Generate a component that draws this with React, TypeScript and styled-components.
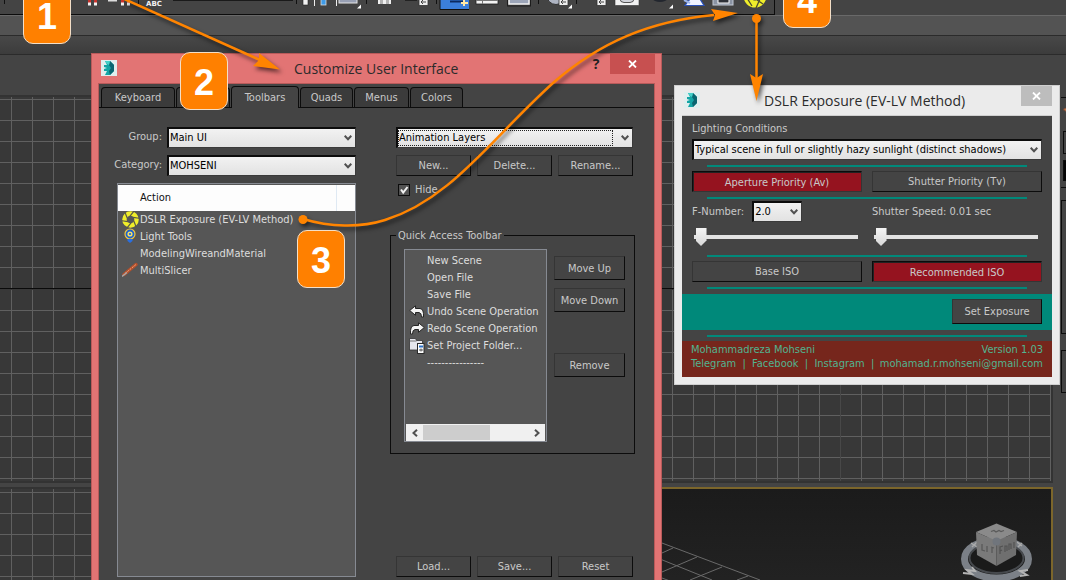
import React from "react";
import styled, { createGlobalStyle, css } from "styled-components";

const ink = "#c9c9c9";
const panel = "#444444";

const GlobalStyle = createGlobalStyle`
  *, *::before, *::after { box-sizing: border-box; }
  body {
    margin: 0;
    background: ${panel};
    color: ${ink};
    font: 11px/17px "DejaVu Sans Condensed", "Noto Sans", sans-serif;
  }
  button, select, input { font: inherit; color: inherit; margin: 0; }
  svg { display: block; }
`;

/* ---------- workspace ---------- */

const Desktop = styled.main`
  position: relative;
  display: flex;
  flex-direction: column;
  height: 100vh;
  min-height: 560px;
  overflow: hidden;
`;
const ToolbarRow = styled.header`
  height: 16px;
  flex: none;
  border-bottom: 1px solid #696969;
`;
const Tools = styled.div`
  display: flex;
  width: max-content;
  height: 15px;
  border: solid #0c0c0c;
  border-width: 0 1px 1px 0;
`;
const Tool = styled.button`
  flex: none;
  padding: 0;
  border: 0;
  background: none;
`;
const Band = styled.div`
  flex: none;
  height: 20px;
  background: #535353;
  border-bottom: 1px solid #2b2b2b;
`;
const LowerBand = styled(Band)`
  height: 19px;
  background: linear-gradient(#484848, #3c3c3c);
`;
const Workspace = styled.div`
  flex: 1;
  min-height: 0;
  display: grid;
  grid-template-columns: 380px 1fr 13px;
`;
const PaneColumn = styled.div`
  display: flex;
  flex-direction: column;
  gap: 4px;
  padding-top: 40px;
  min-width: 0;
`;
const Pane = styled.div<{ $grow?: boolean }>`
  ${(p) => (p.$grow ? "flex: 1; min-height: 0;" : "flex: none; height: 388px;")}
  border: 2px solid #333333;
  border-left: 0;
  background: #383838;
  overflow: hidden;
`;
const Perspective = styled(Pane)`
  border-color: #7c662b;
  border-bottom: 0;
  background: linear-gradient(#1b1b1b, #272727);
  display: flex;
  justify-content: space-between;
`;
const SidePanel = styled.aside`
  display: flex;
  flex-direction: column;
  gap: 16px;
  padding: 42px 0 0 8px;
`;
const SideBox = styled.div<{ $h: number; $fill?: boolean }>`
  height: ${(p) => p.$h}px;
  border: 1px solid #0c0c0c;
  border-right: 0;
  background: ${(p) => (p.$fill ? "#050505" : "none")};
`;
const SideTop = styled.div`
  display: flex;
  flex-direction: column;
  gap: 6px;
  height: 91px;
  margin-bottom: -4px;
  padding-left: 2px;
  border: solid #0c0c0c;
  border-width: 1px 0;
  overflow: hidden;
`;

/* ---------- windows ---------- */

const CustomizeWindow = styled.section`
  position: absolute;
  left: 91px;
  top: 53px;
  bottom: 0;
  width: 571px;
  display: flex;
  flex-direction: column;
  background: #e27474;
  border: 1px solid #b85a5a;
  border-bottom: 0;
  padding: 0 6px;
`;
const ExposureWindow = styled.section`
  position: absolute;
  left: 674px;
  top: 85px;
  width: 386px;
  background: #ebebeb;
  border: 1px solid #cfcfcf;
  padding: 0 7px 7px;
`;
const TitleBar = styled.header<{ $h: number; $pad: number }>`
  display: flex;
  justify-content: space-between;
  height: ${(p) => p.$h}px;
  padding-left: ${(p) => p.$pad}px;
  position: relative;
`;
const Logo = styled.svg`
  margin-top: 6px;
`;
const Title = styled.h1<{ $x: number; $size: number }>`
  position: absolute;
  left: ${(p) => p.$x}px;
  top: 4px;
  margin: 0;
  font: 400 ${(p) => p.$size}px/22px "Open Sans", "Noto Sans", sans-serif;
  color: #2b2b2b;
  white-space: nowrap;
`;
const WindowButtons = styled.div`
  display: flex;
  align-items: flex-start;
`;
const HelpButton = styled.button`
  width: 28px;
  height: 20px;
  padding: 0;
  border: 0;
  background: none;
  color: #222222;
  font: 700 14px/20px "Open Sans", sans-serif;
`;
const CloseButton = styled.button<{ $w: number; $bg: string }>`
  display: grid;
  place-items: center;
  width: ${(p) => p.$w}px;
  height: 20px;
  padding: 0;
  border: 0;
  background: ${(p) => p.$bg};
`;
const Client = styled.div`
  flex: 1;
  display: flex;
  flex-direction: column;
  min-height: 0;
  background: ${panel};
  border: solid #b85a5a;
  border-width: 1px 1px 0;
`;

const Tabs = styled.div`
  display: flex;
  align-items: flex-end;
  gap: 1px;
  height: 24px;
  padding-left: 2px;
  border-bottom: 1px solid #0c0c0c;
`;
const Tab = styled.button<{ $w: number; $on?: boolean }>`
  width: ${(p) => p.$w}px;
  height: ${(p) => (p.$on ? 22 : 20)}px;
  margin-bottom: ${(p) => (p.$on ? -1 : 0)}px;
  padding: 0;
  border: 1px solid #0c0c0c;
  border-bottom: 0;
  border-radius: 4px 4px 0 0;
  background: ${(p) => (p.$on ? panel : "#3b3b3b")};
`;

const raised = css`
  border: 1px solid;
  border-color: #353535 #0c0c0c #0c0c0c #353535;
  background: ${panel};
`;
const PushButton = styled.button<{ $w?: number; $h?: number }>`
  ${raised}
  ${(p) => (p.$w ? `width: ${p.$w}px;` : "flex: 1; min-width: 0;")}
  height: ${(p) => p.$h ?? 21}px;
  padding: 0;
  line-height: 17px;
`;
const ToggleButton = styled(PushButton)<{ $on?: boolean }>`
  ${(p) =>
    p.$on &&
    css`
      background: #95131f;
      border-color: #0c0c0c #353535 #353535 #0c0c0c;
      box-shadow: inset 1px 1px 0 #222222;
      padding-top: 2px;
    `}
`;

const SelectBox = styled.span`
  display: grid;
  align-items: center;
  border: 1px solid #3a3a3a;
  border-top: 2px solid #0c0c0c;
  border-left: 2px solid #0c0c0c;
  height: 21px;
  background: linear-gradient(#f2f2f2, #e2e2e2);
  color: #000000;
  & > * { grid-area: 1 / 1; }
  & > svg { justify-self: end; margin-right: 3px; pointer-events: none; }
`;
const NativeSelect = styled.select<{ $focus?: boolean }>`
  appearance: none;
  width: 100%;
  height: 18px;
  padding: 0 18px 0 1px;
  border: 0;
  background: none;
  line-height: 18px;
  ${(p) =>
    p.$focus &&
    css`
      width: calc(100% - 19px);
      height: 16px;
      padding: 0;
      line-height: 14px;
      border: 1px dotted #222222;
    `}
`;

const Body = styled.div`
  flex: 1;
  min-height: 0;
  display: grid;
  grid-template-columns: 239px 245px;
  column-gap: 34px;
  padding: 19px 0 3px 18px;
`;
const Column = styled.div`
  display: flex;
  flex-direction: column;
  min-height: 0;
`;
const Field = styled.label`
  display: grid;
  grid-template-columns: 45px 1fr;
  column-gap: 5px;
  height: 28px;
  align-items: start;
  & > b { font-weight: 400; text-align: right; white-space: nowrap; direction: rtl; line-height: 20px; }
  & > b > bdi { direction: ltr; }
`;
const List = styled.div<{ $h?: number; $w?: number }>`
  display: flex;
  flex-direction: column;
  ${(p) => (p.$h ? `height: ${p.$h}px; width: ${p.$w}px;` : "flex: 1; min-height: 0;")}
  background: #565656;
  border: 1px solid #868a92;
`;
const ActionTable = styled.table`
  width: 100%;
  border-collapse: collapse;
  th {
    height: 26px;
    padding: 0 0 0 22px;
    background: #fdfdfd;
    color: #111111;
    font-weight: 400;
    text-align: left;
    border-top: 1px solid #565656;
  }
  th + th { width: 19px; padding: 0; border-left: 1px solid #dfe9f3; }
  td { padding: 0 0 0 4px; height: 17px; color: #dddddd; }
`;
const Entry = styled.span`
  display: grid;
  grid-template-columns: 16px 1fr;
  column-gap: 2px;
  height: 17px;
  align-items: center;
  white-space: nowrap;
`;
const QuickList = styled.ul`
  flex: 1;
  list-style: none;
  margin: 0;
  padding: 2px 0 0 4px;
  color: #dddddd;
`;
const ScrollRow = styled.div`
  display: grid;
  grid-template-columns: 17px 67px 1fr 17px;
  height: 17px;
  margin: 0 1px;
  background: #f0f0f0;
`;
const ScrollArrow = styled.button`
  display: grid;
  place-items: center;
  padding: 0;
  border: 0;
  background: none;
`;
const ScrollThumb = styled.div`
  background: #cdcdcd;
  margin: 1px 0;
`;
const Spaced = styled.div<{ $top?: string }>`
  display: flex;
  gap: 6px;
  margin: ${(p) => p.$top ?? "7px"} 2px 0 6px;
`;
const ToolbarSelect = styled.div`
  flex: 1;
`;
const CheckLabel = styled.label`
  display: flex;
  align-items: center;
  gap: 5px;
  margin: 5px 0 0 8px;
`;
const CheckBox = styled.span`
  display: grid;
  width: 12px;
  height: 12px;
  border: 1px solid #0c0c0c;
  background: #525252;
  & > * { grid-area: 1 / 1; }
  & > input { appearance: none; width: 10px; height: 10px; }
  & > svg { pointer-events: none; }
`;
const GroupBox = styled.fieldset`
  display: flex;
  justify-content: space-between;
  margin: 29px 0 0;
  padding: 5px 9px 11px 13px;
  border: 1px solid #0c0c0c;
  & > legend { margin-left: -8px; padding: 0 2px; line-height: 17px; }
`;
const ButtonStack = styled.div`
  display: flex;
  flex-direction: column;
  gap: 8px;
  padding-top: 7px;
  & > :last-child { margin-top: 33px; }
`;

/* ---------- exposure panel ---------- */

const ExposureClient = styled.div`
  background: ${panel};
  border: solid #cfcfcf;
  border-width: 1px 0 0;
`;
const Stack = styled.div`
  padding: 4px 10px 0;
  display: flex;
  flex-direction: column;
`;
const Caption = styled.label`
  height: 19px;
`;
const Rule = styled.hr<{ $after?: number; $side?: number }>`
  width: auto;
  height: 2px;
  margin: 5px ${(p) => p.$side ?? 15}px ${(p) => p.$after ?? 4}px;
  border: 0;
  background: #00897a;
`;
const Pair = styled.div`
  display: grid;
  grid-template-columns: 1fr 1fr;
  column-gap: 10px;
`;
const Cell = styled.div`
  display: flex;
  flex-direction: column;
  gap: 5px;
`;
const Inline = styled.label`
  display: flex;
  align-items: center;
  gap: 8px;
  height: 21px;
`;
const FNumber = styled.span`
  width: 50px;
`;
const Slider = styled.input`
  appearance: none;
  display: block;
  width: calc(100% - 6px);
  height: 20px;
  margin: 0 0 3px 2px;
  background: linear-gradient(#e3e3e3, #e3e3e3) 0 8px / 100% 4px no-repeat;
  &::-webkit-slider-thumb {
    appearance: none;
    width: 11px;
    height: 18px;
    background: linear-gradient(#f4f4f4, #d8d8d8);
    clip-path: polygon(0 0, 100% 0, 100% 70%, 50% 100%, 0 70%);
  }
`;
const ApplyRow = styled.div`
  display: flex;
  justify-content: flex-end;
  padding: 5px 10px 6px;
  margin-top: 1px;
  background: #00897a;
`;
const Credits = styled.footer`
  padding: 2px 9px 6px;
  background: #76261c;
  color: #52b490;
  line-height: 14px;
`;
const CreditRow = styled.div`
  display: flex;
  justify-content: space-between;
  white-space: pre;
  a { color: inherit; text-decoration: none; }
`;

/* ---------- annotations ---------- */

const Arrows = styled.svg`
  position: absolute;
  left: 0;
  top: 0;
  pointer-events: none;
  filter: drop-shadow(2px 3px 2px rgba(0, 0, 0, 0.6));
`;
const Badge = styled.span<{ $x: number; $y: number }>`
  position: absolute;
  left: ${(p) => p.$x}px;
  top: ${(p) => p.$y}px;
  width: 48px;
  height: 58px;
  display: grid;
  place-items: center;
  padding-top: 4px;
  border: 1px solid #f3dfc8;
  border-radius: 10px;
  background: #ff8000;
  color: #ffffff;
  font: 700 36px/36px "Liberation Sans", sans-serif;
`;

/* ---------- drawings ---------- */

const LogoMark = () => (
  <Logo width="16" height="16" viewBox="0 0 16 16" aria-hidden="true">
    <rect width="16" height="16" fill="#dfeeee" />
    <path d="M4 1h5l4 4v6l-4 4H4l2-4H3V9l3-1-3-1V5h3z" fill="#13a5a5" />
    <path d="M9 1l4 4v6l-4 4-1-4 2-3-2-3z" fill="#0a6570" />
    <path d="M4 1h5L8 5 6 4z" fill="#45cfc8" />
  </Logo>
);
const Cross = () => (
  <svg width="9" height="8" viewBox="0 0 9 8" aria-hidden="true">
    <path d="M1 0.5l7 7M8 0.5l-7 7" stroke="#fff" strokeWidth="1.8" />
  </svg>
);
const Chevron = () => (
  <svg width="8" height="6" viewBox="0 0 8 6" aria-hidden="true">
    <path d="M0.7 0.8L4 4.3 7.3 0.8" fill="none" stroke="#505050" strokeWidth="2" />
  </svg>
);
const Aperture = () => (
  <svg width="17" height="17" viewBox="-8 -8 16 16" aria-hidden="true">
    <circle r="5.7" fill="none" stroke="#f0ee2a" strokeWidth="4.2" />
    {[0, 60, 120, 180, 240, 300].map((a) => (
      <path key={a} d="M-0.5 -3.2L3.5 -8.200" stroke="#56564a" strokeWidth="1.100" transform={`rotate(${a})`} />
    ))}
  </svg>
);
const Bulb = () => (
  <svg width="16" height="16" viewBox="0 0 16 16" aria-hidden="true">
    <circle cx="8" cy="6" r="5" fill="#1b62d0" stroke="#f2c63c" strokeWidth="1.2" />
    <circle cx="8" cy="6" r="2.6" fill="#f7e16a" />
    <circle cx="8" cy="6" r="1.1" fill="#1b62d0" />
    <path d="M5.5 11h5v2L8 15l-2.500-2z" fill="#2a6fe0" />
  </svg>
);
const Knife = () => (
  <svg width="16" height="16" viewBox="0 0 16 16" aria-hidden="true">
    <path d="M2 12.500L14 2.500" stroke="#b5502c" strokeWidth="3.400" strokeLinecap="round" />
    <path d="M3 11.500L14 2.500" stroke="#efa47c" strokeWidth="1" strokeDasharray="2 1" />
    <path d="M0 14.500l5-4" stroke="#a8a8a8" strokeWidth="1.500" />
  </svg>
);
const CurvedArrow = ({ flip }: { flip?: boolean }) => (
  <svg width="16" height="14" viewBox="0 0 16 14" aria-hidden="true">
    <path
      d="M0.700 5.500L6.500 0.800V3.500H11Q15 4 14.500 12H12.500Q12.500 7.800 10 7.500H6.500V10.300Z"
      fill="#f4f4f4"
      stroke="#262626"
      strokeWidth="1"
      transform={flip ? "translate(16 0) scale(-1 1)" : undefined}
    />
  </svg>
);
const FolderDoc = () => (
  <svg width="16" height="16" viewBox="0 0 16 16" aria-hidden="true">
    <path d="M0.500 0.500h6l1 2h6v9.500h-13z" fill="#e6e6ec" stroke="#333" strokeWidth="0.800" />
    <path d="M0.500 3h7" stroke="#555" strokeWidth="0.800" />
    <rect x="8.500" y="5.500" width="6.500" height="10" fill="#fff" stroke="#2a2a2a" />
    <rect x="10" y="7.500" width="4" height="2" fill="#2b70c8" />
    <path d="M10 12h4M12 10.500v3" stroke="#555" />
  </svg>
);
const Spark = () => (
  <svg width="8" height="27" viewBox="0 0 8 27" aria-hidden="true">
    <path d="M0 12h8M4.500 6l1 4 3-2v8l-3-2-2 4v-4l-3-3 3-1z" fill="#d98d5c" stroke="#8a4a30" strokeWidth="0.600" />
    <circle cx="6" cy="11.500" r="2" fill="#f4d7b8" />
  </svg>
);

const Sep = ({ x }: { x: number }) => <rect x={x} width="1" height="4" fill="#111" />;
const Corner = ({ x }: { x: number }) => <path d={`M${x + 4} 4.500V8.500H${x}z`} fill="#fff" />;
const Doc = ({ x }: { x: number }) => (
  <>
    <rect x={x} y="-4" width="9" height="9.500" fill="#eeeeee" stroke="#333" strokeWidth="0.800" />
    <path d={`M${x + 2} 2h5M${x + 4} 0l-2 2 2 2`} stroke="#444" fill="none" />
  </>
);
const Magnet = ({ x }: { x: number }) => (
  <>
    <path d={`M${x + 1.500} 0v5M${x + 7.500} 0v5`} stroke="#c9332c" strokeWidth="3" />
    <path d={`M${x + 1.500} 2.500v3M${x + 7.500} 2.500v3`} stroke="#f2f2f2" strokeWidth="3" />
  </>
);

const tools: { name: string; from: number; to: number; art: React.ReactNode }[] = [
  { name: "Snaps", from: 0, to: 104, art: <><Sep x={4} /><Magnet x={88} /></> },
  { name: "Spinner snap", from: 104, to: 138, art: <><rect x="108" width="9" height="1.500" fill="#dddddd" /><Magnet x={121} /></> },
  {
    name: "Selection sets", from: 138, to: 172,
    art: <><Sep x={138} /><text x="146" y="6" fontSize="7" fontWeight="700" fontFamily="DejaVu Sans" fill="#f2f2f2">ABC</text></>,
  },
  { name: "Named selection", from: 172, to: 298, art: <><rect x="173" width="120" height="1" fill="#1a1a1a" /><Sep x={296} /></> },
  {
    name: "Mirror", from: 298, to: 333,
    art: <><rect x="303" y="-2" width="5" height="7" fill="#f2f2f2" stroke="#222" strokeWidth="0.600" /><rect x="314" width="1" height="6" fill="#eee" /><rect x="321" y="-2" width="5" height="7" fill="#3f9be8" stroke="#ddd" strokeWidth="0.800" /></>,
  },
  { name: "Align", from: 333, to: 366, art: <><rect x="336" width="1" height="6" fill="#eee" /><rect x="339" y="-2" width="18" height="5" fill="#98a0b4" stroke="#e6e6e6" /><Corner x={357} /></> },
  { name: "Layer explorer", from: 366, to: 402, art: <><Sep x={366} /><rect x="378" y="-2" width="13" height="6" fill="#f0f0f0" /><path d="M380 1h3M380 3h3M386 1h3M386 3h3" stroke="#777" /></> },
  { name: "Scene explorer", from: 402, to: 436, art: <><rect x="405" width="12" height="1" fill="#222" /><Doc x={419} /></> },
  {
    name: "Toggle ribbon", from: 436, to: 472,
    art: <><Sep x={436} /><rect x="440" width="29" height="9" fill="#3b7fdc" /><path d="M440 0v9.500h29" fill="none" stroke="#111" /><path d="M450 1.500h14" stroke="#0c2a60" strokeWidth="2" /><path d="M464 0v6M461 3h7" stroke="#ffe9a8" strokeWidth="2" /></>,
  },
  { name: "Curve editor", from: 472, to: 503, art: <><rect x="476" y="-2" width="22" height="6" fill="#f4f4f4" stroke="#222" strokeWidth="0.800" /><path d="M482.500 0v4M476 .5h22" stroke="#777" /></> },
  { name: "Schematic view", from: 503, to: 536, art: <><rect x="509" y="-2" width="20" height="6" fill="#9ca5b8" stroke="#f2f2f2" strokeWidth="1.500" /><rect x="507.500" y="-2" width="23" height="8" fill="none" stroke="#1c1c1c" /></> },
  { name: "Material editor", from: 536, to: 574, art: <><Sep x={538} /><circle cx="556" cy="-5" r="9.500" fill="#aeb4c2" stroke="#333" /><Doc x={559} /><Corner x={568} /></> },
  { name: "Render setup", from: 574, to: 611, art: <><Sep x={576} /><Doc x={597} /></> },
  { name: "Rendered frame", from: 611, to: 646, art: <><rect x="615" y="-4" width="24" height="9.500" fill="#f2f2f2" stroke="#333" strokeWidth="0.600" /><rect x="620" y="-6" width="14" height="8.500" rx="4" fill="#d2d4da" stroke="#555" /></> },
  { name: "Render", from: 646, to: 680, art: <><ellipse cx="660" cy="-1" rx="7" ry="3" fill="#22262e" /><Corner x={669} /></> },
  { name: "Render iterative", from: 680, to: 708, art: <><path d="M690 -1L685 5.500H704L700 -1z" fill="#f0f4ff" stroke="#2b52b8" strokeWidth="1.200" /><path d="M684 0l6 3" stroke="#9db6ee" strokeWidth="2" /></> },
  { name: "Render frame window", from: 708, to: 740, art: <><rect x="713" y="-4" width="20" height="9" fill="#8a93a3" stroke="#c3c9d4" /><rect x="718" y="-4" width="11" height="7" fill="#2e3138" stroke="#fff" /></> },
  {
    name: "DSLR Exposure", from: 740, to: 774,
    art: <><circle cx="755" cy="-4" r="8" fill="none" stroke="#f0ee2a" strokeWidth="7" /><path d="M747 -2l5 8M756 8l4-9M763 4l-6-4" stroke="#4b4b33" strokeWidth="1.300" /></>,
  },
];

const GridLines = ({ id, x, y, axisX, axisY }: { id: string; x: number; y: number; axisX?: number; axisY?: number }) => (
  <svg width="100%" height="100%" aria-hidden="true">
    <defs>
      <pattern id={`${id}a`} x={x} y={y} width="21" height="21" patternUnits="userSpaceOnUse">
        <path d="M0.500 0V21M0 0.500H21" stroke="#606060" />
      </pattern>
      <pattern id={`${id}b`} x={x} y={y + 1} width="21" height="21" patternUnits="userSpaceOnUse">
        <path d="M0.500 0V21M0 0.500H21" stroke="#606060" />
      </pattern>
    </defs>
    <rect width="100%" height={axisY ?? "100%"} fill={`url(#${id}a)`} />
    {axisY !== undefined && (
      <>
        <rect y={axisY + 2} width="100%" height="100%" fill={`url(#${id}b)`} />
        <rect y={axisY} width="100%" height="1" fill="#0a0a0a" />
      </>
    )}
    {axisX !== undefined && <rect x={axisX} width="1" height="100%" fill="#484848" />}
  </svg>
);

const FloorGrid = () => (
  <svg width="400" height="91" viewBox="380 489 400 91" aria-hidden="true">
    <path
      d="M650 538.500L760 580M662 553L673 548M655 557L712 580M662 572L697 557M690 580L722 567M737 580L748 576M662 578L670 581"
      fill="none"
      stroke="#6a6a6a"
    />
  </svg>
);

const ViewCube = () => (
  <svg width="92" height="91" viewBox="959 489 92 91" aria-hidden="true">
    <ellipse cx="996.500" cy="559" rx="32" ry="19" fill="#1a1a1a" stroke="#7b8087" strokeWidth="7" />
    <ellipse cx="996.500" cy="558" rx="27" ry="15" fill="none" stroke="#46494d" strokeWidth="2" />
    <path d="M963 573l9 1-5-4 8 1-3-4" stroke="#b4b4b4" fill="none" strokeWidth="1.800" />
    <path d="M1028 570l-8 1 7 4-7 1" stroke="#b4b4b4" fill="none" strokeWidth="1.800" />
    <path d="M971 543l6 4M977 542l-5 5M1017 542l5 4M1022 543l-4 4" stroke="#aaaaaa" strokeWidth="1.500" />
    <path d="M976 532L996.500 523.500L1017 532L996.500 541z" fill="#8a8a8a" />
    <path d="M976 532L996.500 541V566L977 555z" fill="#7a7a7a" />
    <path d="M1017 532L996.500 541V566L1016 555z" fill="#6f6f6f" />
    <circle cx="996.500" cy="541.500" r="4" fill="#70757c" />
    <path d="M991 531.500l3-1 2 1.500 3-1.500 2 1 3-1" stroke="#5a5a5a" fill="none" strokeWidth="1.300" />
    <path d="M982 544v6l3 1M987 546v6M991 547l3 1M992 548v5" stroke="#595959" fill="none" strokeWidth="1.300" />
    <path d="M1000 554v-7l3-1M1000 551l2-1M1005 552v-6l2 0v5M1009 550v-6l2 0v5M1014 548v-6" stroke="#525252" fill="none" strokeWidth="1.200" />
  </svg>
);

/* ---------- pieces ---------- */

const Dropdown = ({ options, label, focus }: { options: string[]; label?: string; focus?: boolean }) => (
  <SelectBox>
    <NativeSelect aria-label={label} $focus={focus}>
      {options.map((o) => <option key={o}>{o}</option>)}
    </NativeSelect>
    <Chevron />
  </SelectBox>
);

const actions = [
  { text: "DSLR Exposure (EV-LV Method)", icon: <Aperture /> },
  { text: "Light Tools", icon: <Bulb /> },
  { text: "ModelingWireandMaterial" },
  { text: "MultiSlicer", icon: <Knife /> },
];
const quick = [
  { text: "New Scene" },
  { text: "Open File" },
  { text: "Save File" },
  { text: "Undo Scene Operation", icon: <CurvedArrow /> },
  { text: "Redo Scene Operation", icon: <CurvedArrow flip /> },
  { text: "Set Project Folder...", icon: <FolderDoc /> },
  { text: "----------------" },
];

const CustomizeDialog = () => (
  <CustomizeWindow aria-label="Customize User Interface">
    <TitleBar $h={29} $pad={3}>
      <LogoMark />
      <Title $x={196} $size={14}>Customize User Interface</Title>
      <WindowButtons>
        <HelpButton>?</HelpButton>
        <CloseButton $w={45} $bg="#c75050" aria-label="Close"><Cross /></CloseButton>
      </WindowButtons>
    </TitleBar>
    <Client>
      <Tabs role="tablist">
        <Tab role="tab" $w={74}>Keyboard</Tab>
        <Tab role="tab" $w={54} aria-label="Mouse" />
        <Tab role="tab" $w={68} $on aria-selected>Toolbars</Tab>
        <Tab role="tab" $w={53}>Quads</Tab>
        <Tab role="tab" $w={55}>Menus</Tab>
        <Tab role="tab" $w={53}>Colors</Tab>
      </Tabs>
      <Body>
        <Column>
          <Field><b><bdi>Group:</bdi></b><Dropdown options={["Main UI"]} /></Field>
          <Field><b><bdi>Category:</bdi></b><Dropdown options={["MOHSENI"]} /></Field>
          <List>
            <ActionTable>
              <thead><tr><th>Action</th><th aria-label="Shortcut" /></tr></thead>
              <tbody>
                {actions.map((a) => (
                  <tr key={a.text}><td colSpan={2}><Entry><span>{a.icon}</span><span>{a.text}</span></Entry></td></tr>
                ))}
              </tbody>
            </ActionTable>
          </List>
        </Column>
        <Column>
          <Spaced $top="0"><ToolbarSelect><Dropdown label="Toolbar" focus options={["Animation Layers"]} /></ToolbarSelect></Spaced>
          <Spaced>
            <PushButton>New...</PushButton>
            <PushButton>Delete...</PushButton>
            <PushButton>Rename...</PushButton>
          </Spaced>
          <CheckLabel>
            <CheckBox>
              <input type="checkbox" defaultChecked />
              <svg width="10" height="10" viewBox="0 0 10 10" aria-hidden="true">
                <path d="M2 4.500L4.200 7.500L8.500 2" fill="none" stroke="#f2f2f2" strokeWidth="2" />
              </svg>
            </CheckBox>
            Hide
          </CheckLabel>
          <GroupBox>
            <legend>Quick Access Toolbar</legend>
            <List $w={143} $h={193}>
              <QuickList>
                {quick.map((q) => (
                  <li key={q.text}><Entry><span>{q.icon}</span><span>{q.text}</span></Entry></li>
                ))}
              </QuickList>
              <ScrollRow>
                <ScrollArrow aria-label="Scroll left">
                  <svg width="6" height="8" viewBox="0 0 6 8"><path d="M5 0.800L1.500 4L5 7.200" fill="none" stroke="#505050" strokeWidth="2" /></svg>
                </ScrollArrow>
                <ScrollThumb />
                <span />
                <ScrollArrow aria-label="Scroll right">
                  <svg width="6" height="8" viewBox="0 0 6 8"><path d="M1 0.800L4.500 4L1 7.200" fill="none" stroke="#505050" strokeWidth="2" /></svg>
                </ScrollArrow>
              </ScrollRow>
            </List>
            <ButtonStack>
              <PushButton $w={71} $h={24}>Move Up</PushButton>
              <PushButton $w={71} $h={24}>Move Down</PushButton>
              <PushButton $w={71} $h={24}>Remove</PushButton>
            </ButtonStack>
          </GroupBox>
          <Spaced $top="auto">
            <PushButton>Load...</PushButton>
            <PushButton>Save...</PushButton>
            <PushButton>Reset</PushButton>
          </Spaced>
        </Column>
      </Body>
    </Client>
  </CustomizeWindow>
);

const ExposureDialog = () => (
  <ExposureWindow aria-label="DSLR Exposure">
    <TitleBar $h={29} $pad={2}>
      <LogoMark />
      <Title $x={82} $size={14}>DSLR Exposure (EV-LV Method)</Title>
      <WindowButtons>
        <CloseButton $w={31} $bg="#bdbdbd" aria-label="Close"><Cross /></CloseButton>
      </WindowButtons>
    </TitleBar>
    <ExposureClient>
      <Stack>
        <Caption htmlFor="lighting">Lighting Conditions</Caption>
        <SelectBox>
          <NativeSelect id="lighting">
            <option>Typical scene in full or slightly hazy sunlight (distinct shadows)</option>
          </NativeSelect>
          <Chevron />
        </SelectBox>
        <Rule />
        <Pair>
          <ToggleButton $on aria-pressed>Aperture Priority (Av)</ToggleButton>
          <ToggleButton>Shutter Priority (Tv)</ToggleButton>
        </Pair>
        <Rule $after={2} />
        <Pair>
          <Cell>
            <Inline>F-Number:<FNumber><Dropdown options={["2.0"]} /></FNumber></Inline>
            <Slider type="range" min={0} max={100} defaultValue={1} aria-label="F-Number" />
          </Cell>
          <Cell>
            <Inline as="div">Shutter Speed: 0.01 sec</Inline>
            <Slider type="range" min={0} max={100} defaultValue={1} aria-label="Shutter speed" />
          </Cell>
        </Pair>
        <Rule />
        <Pair>
          <ToggleButton>Base ISO</ToggleButton>
          <ToggleButton $on aria-pressed>Recommended ISO</ToggleButton>
        </Pair>
        <Rule />
      </Stack>
      <ApplyRow><PushButton $w={90} $h={25}>Set Exposure</PushButton></ApplyRow>
      <Rule $side={25} />
      <Credits>
        <CreditRow><span>Mohammadreza Mohseni</span><span>Version 1.03</span></CreditRow>
        <CreditRow>
          <span><a href="#telegram">Telegram</a>  |  <a href="#facebook">Facebook</a>  |  <a href="#instagram">Instagram</a>  |</span>
          <a href="mailto:mohamad.r.mohseni@gmail.com">mohamad.r.mohseni@gmail.com</a>
        </CreditRow>
      </Credits>
    </ExposureClient>
  </ExposureWindow>
);

export default function App() {
  return (
    <Desktop>
      <GlobalStyle />
      <ToolbarRow>
        <Tools>
          {tools.map((t) => (
            <Tool key={t.name} aria-label={t.name}>
              <svg width={t.to - t.from} height="14" viewBox={`${t.from} 0 ${t.to - t.from} 14`}>{t.art}</svg>
            </Tool>
          ))}
        </Tools>
      </ToolbarRow>
      <Band />
      <LowerBand />
      <Workspace>
        <PaneColumn>
          <Pane><GridLines id="top" x={11} y={2} axisY={191} /></Pane>
          <Pane $grow><GridLines id="left" x={11} y={3} /></Pane>
        </PaneColumn>
        <PaneColumn>
          <Pane><GridLines id="front" x={292} y={2} axisX={460} axisY={191} /></Pane>
          <Perspective $grow><FloorGrid /><ViewCube /></Perspective>
        </PaneColumn>
        <SidePanel>
          <SideTop>
            <Spark />
            <SideBox $h={23} />
            <SideBox $h={21} $fill />
          </SideTop>
          <SideBox $h={134} />
          <SideBox $h={43} />
        </SidePanel>
      </Workspace>
      <CustomizeDialog />
      <ExposureDialog />
      <Arrows width="1066" height="580" viewBox="0 0 1066 580" aria-hidden="true">
        <g fill="none" stroke="#ff8400" strokeWidth="2.500">
          <path d="M122 -2L260 60" />
          <path d="M303 219C330 227 360 228 385 220C450 200 490 140 553 83C600 42 650 21 714 15" />
          <path d="M756.500 18V80" />
        </g>
        <g fill="#ff8400">
          <path d="M259 53L280 69.500L253 66L259 60z" />
          <path d="M711 9L738 13L713 21L715 15z" />
          <path d="M750 74L756.500 101L763 74L756.500 78z" />
          <circle cx="303" cy="219.500" r="4.500" />
          <circle cx="756.500" cy="18.500" r="4.500" />
        </g>
      </Arrows>
      <Badge $x={23} $y={-14}>1</Badge>
      <Badge $x={180} $y={52}>2</Badge>
      <Badge $x={297} $y={230}>3</Badge>
      <Badge $x={783} $y={-30}>4</Badge>
    </Desktop>
  );
}
